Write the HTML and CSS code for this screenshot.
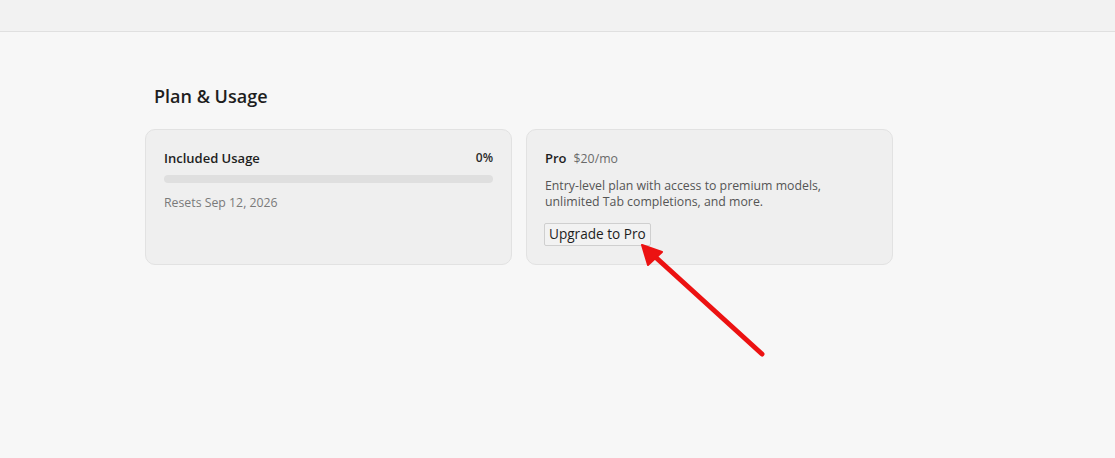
FILE: index.html
```html
<!DOCTYPE html>
<html>
<head>
<meta charset="utf-8">
<link rel="stylesheet" href="styles.css">
</head>
<body>
<div class="topbar"></div>
<main class="main">
  <h2 class="title">Plan &amp; Usage</h2>
  <div class="cards">
    <section class="card">
      <div class="row">
        <span class="label">Included Usage</span>
        <span class="pct">0%</span>
      </div>
      <div class="bar"><div class="fill" style="width:0%"></div></div>
      <div class="muted">Resets Sep 12, 2026</div>
    </section>
    <section class="card">
      <div class="plan"><span class="label">Pro</span><span class="price">$20/mo</span></div>
      <p class="desc">Entry-level plan with access to premium models,<br>unlimited Tab completions, and more.</p>
      <button class="btn">Upgrade to Pro</button>
    </section>
  </div>
</main>
<svg class="arrow" width="1115" height="458" viewBox="0 0 1115 458">
  <line x1="762" y1="354" x2="652" y2="254" stroke="#ec1212" stroke-width="5" stroke-linecap="round"/>
  <polygon points="642,245 662,252 648,265" fill="#ec1212" stroke="#ec1212" stroke-width="2" stroke-linejoin="round"/>
</svg>
</body>
</html>
```
FILE: styles.css
```css
html, body { margin: 0; padding: 0; }
body {
  background: #f7f7f7;
  font-family: "Open Sans", "Noto Sans", sans-serif;
  color: #1f1f1f;
  width: 1115px;
  height: 458px;
  overflow: hidden;
  position: relative;
}
.topbar {
  height: 31px;
  background: #f2f2f2;
  border-bottom: 1px solid #e0e0e0;
}
.main {
  padding: 52px 0 0 145px;
}
.title {
  margin: 0 0 21px 9px;
  font-size: 18px;
  font-weight: 600;
  line-height: 24px;
  color: #1e1e1e;
}
.cards {
  display: flex;
  gap: 14px;
}
.card {
  box-sizing: border-box;
  width: 367px;
  height: 136px;
  background: #efefef;
  border: 1px solid #e2e2e2;
  border-radius: 10px;
  padding: 19px 18px 18px;
}
.row {
  display: flex;
  justify-content: space-between;
  align-items: center;
  line-height: 18px;
}
.label {
  font-size: 13px;
  font-weight: 600;
  color: #1e1e1e;
}
.pct {
  font-size: 12px;
  font-weight: 600;
  color: #2a2a2a;
}
.bar {
  margin-top: 8px;
  height: 8px;
  border-radius: 4px;
  background: #dfdfdf;
  overflow: hidden;
}
.fill { height: 100%; background: #888; }
.muted {
  margin-top: 11px;
  font-size: 12.3px;
  line-height: 18px;
  color: #7a7a7a;
}
.plan {
  display: flex;
  align-items: baseline;
  gap: 7px;
  line-height: 18px;
}
.price {
  font-size: 12.3px;
  color: #6a6a6a;
}
.desc {
  margin: 10px 0 0;
  font-size: 12.3px;
  line-height: 16px;
  color: #555;
}
.btn {
  display: block;
  margin: 13px 0 0 -1px;
  font-family: inherit;
  font-size: 13.6px;
  color: #1e1e1e;
  background: #f2f2f2;
  border: 1px solid #cfcfcf;
  border-radius: 2px;
  padding: 1px 4px 2px;
  line-height: 18px;
}
.arrow {
  position: absolute;
  left: 0;
  top: 0;
  pointer-events: none;
}
```
